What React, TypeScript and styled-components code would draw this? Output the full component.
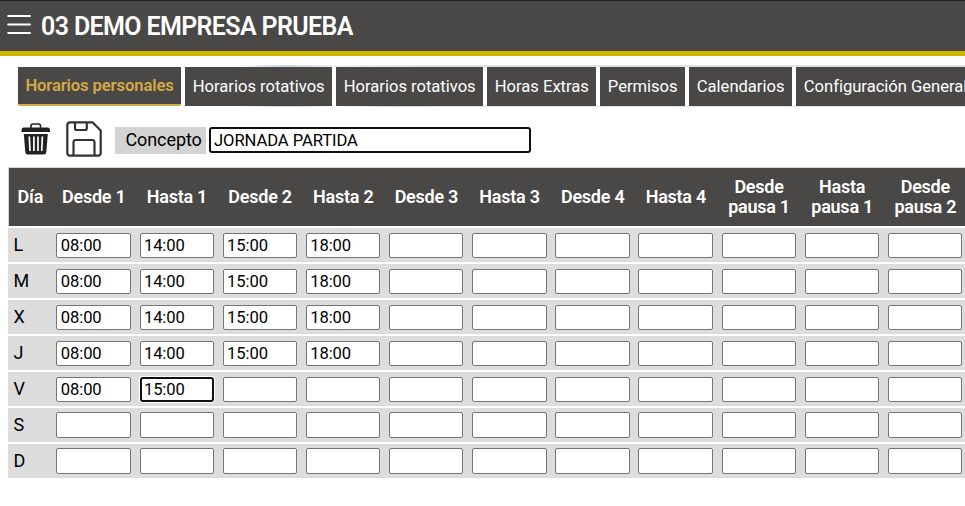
import React from "react";
import styled, { createGlobalStyle, css } from "styled-components";

const Global = createGlobalStyle`
  * { box-sizing: border-box; }
  body { margin: 0; background: #fff; overflow: hidden; font-family: Roboto, "Liberation Sans", sans-serif; color: #000; }
`;

const Page = styled.div`
  width: 965px;
  height: 506px;
  overflow: hidden;
`;

const TopBar = styled.header`
  display: flex;
  align-items: center;
  height: 56px;
  padding: 0 0 2px 7px;
  background: #4a4846;
  border-top: 1px solid #222120;
  border-bottom: 5px solid #ceb800;
`;

const Title = styled.h1`
  margin: 4px 0 0 9px;
  font-size: 25px;
  font-weight: 600;
  line-height: 30px;
  letter-spacing: -0.63px;
  color: #fff;
  white-space: nowrap;
`;

const TabStrip = styled.nav`
  display: flex;
  gap: 4px;
  margin-top: 9px;
  padding: 2px 0 1px 18px;
  height: 42px;
  background:
    linear-gradient(90deg, #fff 235px, #c5d5dc 285px, #eef3f3 335px, #dfe4e0 420px) 0 0 / 100% 2px no-repeat,
    linear-gradient(90deg, #fff 235px, #c5d5dc 285px, #fff 335px, #c5d5dc 395px, #dfe4e0 440px) 0 100% / 100% 1px no-repeat;
`;

const Tab = styled.button<{ $width: number; $active?: boolean }>`
  flex: 0 0 ${(p) => p.$width}px;
  height: 39px;
  padding: 0 0 0 7.8px;
  border: 0;
  background: #4a4846;
  box-shadow: 4px 0 0 #fff;
  color: #fff;
  font: 400 16.6px/37px Roboto, sans-serif;
  letter-spacing: -0.02px;
  text-align: left;
  white-space: nowrap;
  ${(p) =>
    p.$active &&
    css`
      padding-top: 1px;
      line-height: 36px;
      padding-left: 7.4px;
      color: #d5a945;
      font-weight: 600;
      letter-spacing: -0.1px;
      border-bottom: 2px solid #d5a945;
      border-radius: 0 0 2px 2px;
    `}
`;

const Toolbar = styled.div`
  display: flex;
  align-items: center;
  height: 59px;
  padding: 6px 0 0 21px;
`;

const IconButton = styled.button<{ $gap: number; $lift?: number }>`
  display: block;
  flex: none;
  padding: 0;
  margin: 0 ${(p) => p.$gap}px ${(p) => p.$lift ?? 0}px 0;
  border: 0;
  background: none;
  line-height: 0;
`;

const ConceptLabel = styled.label`
  width: 91px;
  height: 27px;
  margin: 1px 3px 0 0;
  padding-left: 10.5px;
  background: #d3d3d3;
  font-size: 18px;
  line-height: 25px;
  letter-spacing: -0.1px;
`;

const ConceptInput = styled.input`
  width: 322px;
  height: 26px;
  margin-top: 1px;
  padding: 0 0 0 3px;
  border: 2px solid #101010;
  border-radius: 3px;
  outline: none;
  font: 400 16.6px Roboto, sans-serif;
  letter-spacing: -0.08px;
  color: #000;
`;

const Schedule = styled.div`
  width: 1090px;
  margin: 1px 0 0 8px;
`;

const columns = css`
  display: grid;
  grid-template-columns: 43.7px repeat(12, 83.16px);
  align-items: center;
`;

const HeadRow = styled.div`
  ${columns}
  height: 59px;
  margin-bottom: 2px;
  border-top: 1px solid #d4d4d4;
  border-left: 1px solid #d4d4d4;
  background: #4a4846;
`;

const HeadCell = styled.div`
  padding: 0 4.5px 0 3.5px;
  color: #fff;
  font-size: 18px;
  font-weight: 600;
  line-height: 20px;
  letter-spacing: -0.25px;
  text-align: center;
`;

const DayRow = styled.div`
  ${columns}
  height: 34px;
  margin-bottom: 2px;
  background: #ddd;
`;

const Day = styled.div`
  padding-left: 5.5px;
  font-size: 18px;
  line-height: 34px;
`;

const TimeInput = styled.input<{ $empty: boolean; $focused: boolean }>`
  width: 74.4px;
  height: ${(p) => (p.$empty ? 26 : 25)}px;
  margin-left: 4.7px;
  margin-top: ${(p) => (p.$empty ? 0 : 1)}px;
  padding: 0 0 1px 3.4px;
  border: 1px solid #767676;
  border-radius: 2px;
  outline: none;
  background: #fff;
  color: #000;
  font: 400 16.6px Roboto, sans-serif;
  letter-spacing: -0.1px;
  ${(p) =>
    p.$focused &&
    css`
      padding-left: 2.4px;
      border: 2px solid #101010;
      border-radius: 3px;
      box-shadow: 0 0 0 1px #fff;
    `}
`;

const MenuIcon = () => (
  <svg width="25" height="22" viewBox="0 0 25 22" stroke="#fff" strokeWidth="2" strokeLinecap="round">
    <path d="M1.2 2H23M1.2 10.500H23M1.2 19H23" />
  </svg>
);

const TrashIcon = () => (
  <svg width="30" height="34" viewBox="0 0 30 34" fill="#222">
    <path d="M10 6V3.800Q10 2 12 2H17.500Q19.500 2 19.500 3.800V6" fill="none" stroke="#222" strokeWidth="1.600" />
    <path d="M2.500 5.500H27Q29 5.500 29 8V10H.5V8Q.5 5.500 2.500 5.500Z" />
    <path d="M2.800 12H26.800L25.300 30Q25.100 32.500 22.800 32.500H6.800Q4.500 32.500 4.300 30Z" />
    <path d="M8.300 14.500L9 29M12.900 14.500V29M17 14.500V29M21.400 14.500L20.700 29" stroke="#fff" strokeWidth="1.700" />
  </svg>
);

const SaveIcon = () => (
  <svg width="36" height="36" viewBox="0 0 36 36" fill="none" stroke="#333" strokeWidth="2.200" strokeLinejoin="round">
    <path d="M4 1.300H26.500L34.700 9.500V32Q34.700 34.700 32 34.700H4Q1.300 34.700 1.300 32V4Q1.300 1.300 4 1.300Z" />
    <path d="M9 1.500V7.200Q9 9 10.800 9H19Q20.800 9 20.800 7.200V1.500M7.500 34.500V21.300Q7.500 19 9.800 19H26.200Q28.500 19 28.500 21.300V34.500" />
  </svg>
);

const tabs = [
  { label: "Horarios personales", width: 163 },
  { label: "Horarios rotativos", width: 147 },
  { label: "Horarios rotativos", width: 147 },
  { label: "Horas Extras", width: 109 },
  { label: "Permisos", width: 85 },
  { label: "Calendarios", width: 103 },
  { label: "Configuración General", width: 179 },
];

const headings = [
  "Día", "Desde 1", "Hasta 1", "Desde 2", "Hasta 2", "Desde 3", "Hasta 3",
  "Desde 4", "Hasta 4", "Desde pausa 1", "Hasta pausa 1", "Desde pausa 2",
];

const fullDay = ["08:00", "14:00", "15:00", "18:00"];
const days = [
  { day: "L", times: fullDay },
  { day: "M", times: fullDay },
  { day: "X", times: fullDay },
  { day: "J", times: fullDay },
  { day: "V", times: ["08:00", "15:00"], focused: 1 },
  { day: "S", times: [] as string[] },
  { day: "D", times: [] as string[] },
];

export default function App() {
  return (
    <Page>
      <Global />
      <TopBar>
        <MenuIcon />
        <Title>03 DEMO EMPRESA PRUEBA</Title>
      </TopBar>
      <TabStrip>
        {tabs.map((t, i) => (
          <Tab key={i} $width={t.width} $active={i === 0}>{t.label}</Tab>
        ))}
      </TabStrip>
      <Toolbar>
        <IconButton $gap={15} $lift={1} aria-label="Eliminar"><TrashIcon /></IconButton>
        <IconButton $gap={13} $lift={1} aria-label="Guardar"><SaveIcon /></IconButton>
        <ConceptLabel htmlFor="concepto">Concepto</ConceptLabel>
        <ConceptInput id="concepto" defaultValue="JORNADA PARTIDA" />
      </Toolbar>
      <Schedule>
        <HeadRow>
          {headings.map((h) => <HeadCell key={h}>{h}</HeadCell>)}
        </HeadRow>
        {days.map(({ day, times, focused }) => (
          <DayRow key={day}>
            <Day>{day}</Day>
            {Array.from({ length: 11 }, (_, i) => (
              <TimeInput
                key={i}
                defaultValue={times[i] ?? ""}
                $empty={times.length === 0}
                $focused={focused === i}
              />
            ))}
          </DayRow>
        ))}
      </Schedule>
    </Page>
  );
}
